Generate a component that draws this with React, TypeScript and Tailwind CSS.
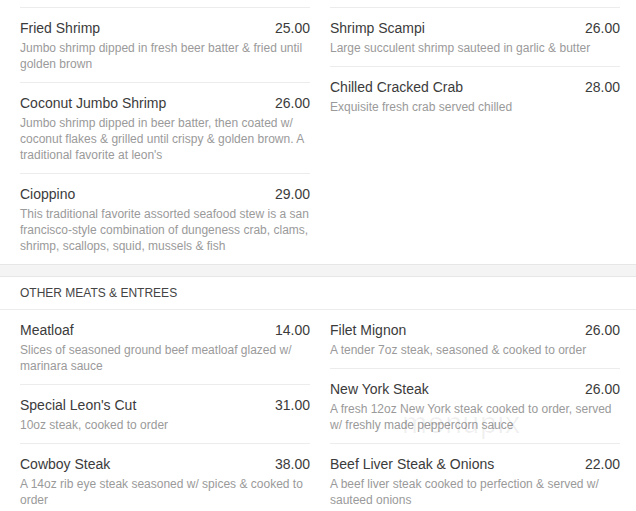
type Dish = { name: string; price: string; desc: string };

const seafoodLeft: Dish[] = [
  { name: 'Fried Shrimp', price: '25.00', desc: 'Jumbo shrimp dipped in fresh beer batter & fried until golden brown' },
  {
    name: 'Coconut Jumbo Shrimp',
    price: '26.00',
    desc: "Jumbo shrimp dipped in beer batter, then coated w/ coconut flakes & grilled until crispy & golden brown. A traditional favorite at leon's",
  },
  {
    name: 'Cioppino',
    price: '29.00',
    desc: 'This traditional favorite assorted seafood stew is a san francisco-style combination of dungeness crab, clams, shrimp, scallops, squid, mussels & fish',
  },
];

const seafoodRight: Dish[] = [
  { name: 'Shrimp Scampi', price: '26.00', desc: 'Large succulent shrimp sauteed in garlic & butter' },
  { name: 'Chilled Cracked Crab', price: '28.00', desc: 'Exquisite fresh crab served chilled' },
];

const meatsLeft: Dish[] = [
  { name: 'Meatloaf', price: '14.00', desc: 'Slices of seasoned ground beef meatloaf glazed w/ marinara sauce' },
  { name: "Special Leon's Cut", price: '31.00', desc: '10oz steak, cooked to order' },
  { name: 'Cowboy Steak', price: '38.00', desc: 'A 14oz rib eye steak seasoned w/ spices & cooked to order' },
];

const meatsRight: Dish[] = [
  { name: 'Filet Mignon', price: '26.00', desc: 'A tender 7oz steak, seasoned & cooked to order' },
  {
    name: 'New York Steak',
    price: '26.00',
    desc: 'A fresh 12oz New York steak cooked to order, served w/ freshly made peppercorn sauce',
  },
  { name: 'Beef Liver Steak & Onions', price: '22.00', desc: 'A beef liver steak cooked to perfection & served w/ sauteed onions' },
];

function Item({ dish, first }: { dish: Dish; first?: boolean }) {
  return (
    <div className={first ? 'pt-[10px] pb-[10px]' : 'border-t border-[#ececec] pt-[10px] pb-[10px]'}>
      <div className="flex justify-between text-[14px] leading-[20px] text-[#3b3b3b]">
        <span>{dish.name}</span>
        <span>{dish.price}</span>
      </div>
      <p className="mt-[2px] text-[12px] leading-[16px] text-[#9a9a9a]">{dish.desc}</p>
    </div>
  );
}

function Column({ dishes, skipFirstBorder }: { dishes: Dish[]; skipFirstBorder?: boolean }) {
  return (
    <div>
      {dishes.map((d, i) => (
        <Item key={d.name} dish={d} first={skipFirstBorder && i === 0} />
      ))}
    </div>
  );
}

export default function App() {
  return (
    <div
      className="relative h-[511px] w-[636px] overflow-hidden bg-white"
      style={{ fontFamily: '"Liberation Sans", Arial, sans-serif' }}
    >
      {/* Seafood (continued) */}
      <div className="grid grid-cols-[290px_290px] gap-x-[20px] pl-[20px] pt-[7px]">
        <Column dishes={seafoodLeft} />
        <Column dishes={seafoodRight} />
      </div>

      {/* section break */}
      <div className="h-[13px] border-y border-[#e6e6e6] bg-[#f4f4f4]" />

      {/* Other meats */}
      <div className="flex h-[33px] items-center border-b border-[#ececec] px-[20px] text-[12px] uppercase text-[#444]">
        Other Meats &amp; Entrees
      </div>
      <div className="grid grid-cols-[290px_290px] gap-x-[20px] pl-[20px]">
        <Column dishes={meatsLeft} skipFirstBorder />
        <Column dishes={meatsRight} skipFirstBorder />
      </div>

      {/* watermark */}
      <div className="pointer-events-none absolute left-[402px] top-[408px] text-[30px] leading-none tracking-wide text-[#000]/[0.06]">
        menupix
      </div>
    </div>
  );
}
